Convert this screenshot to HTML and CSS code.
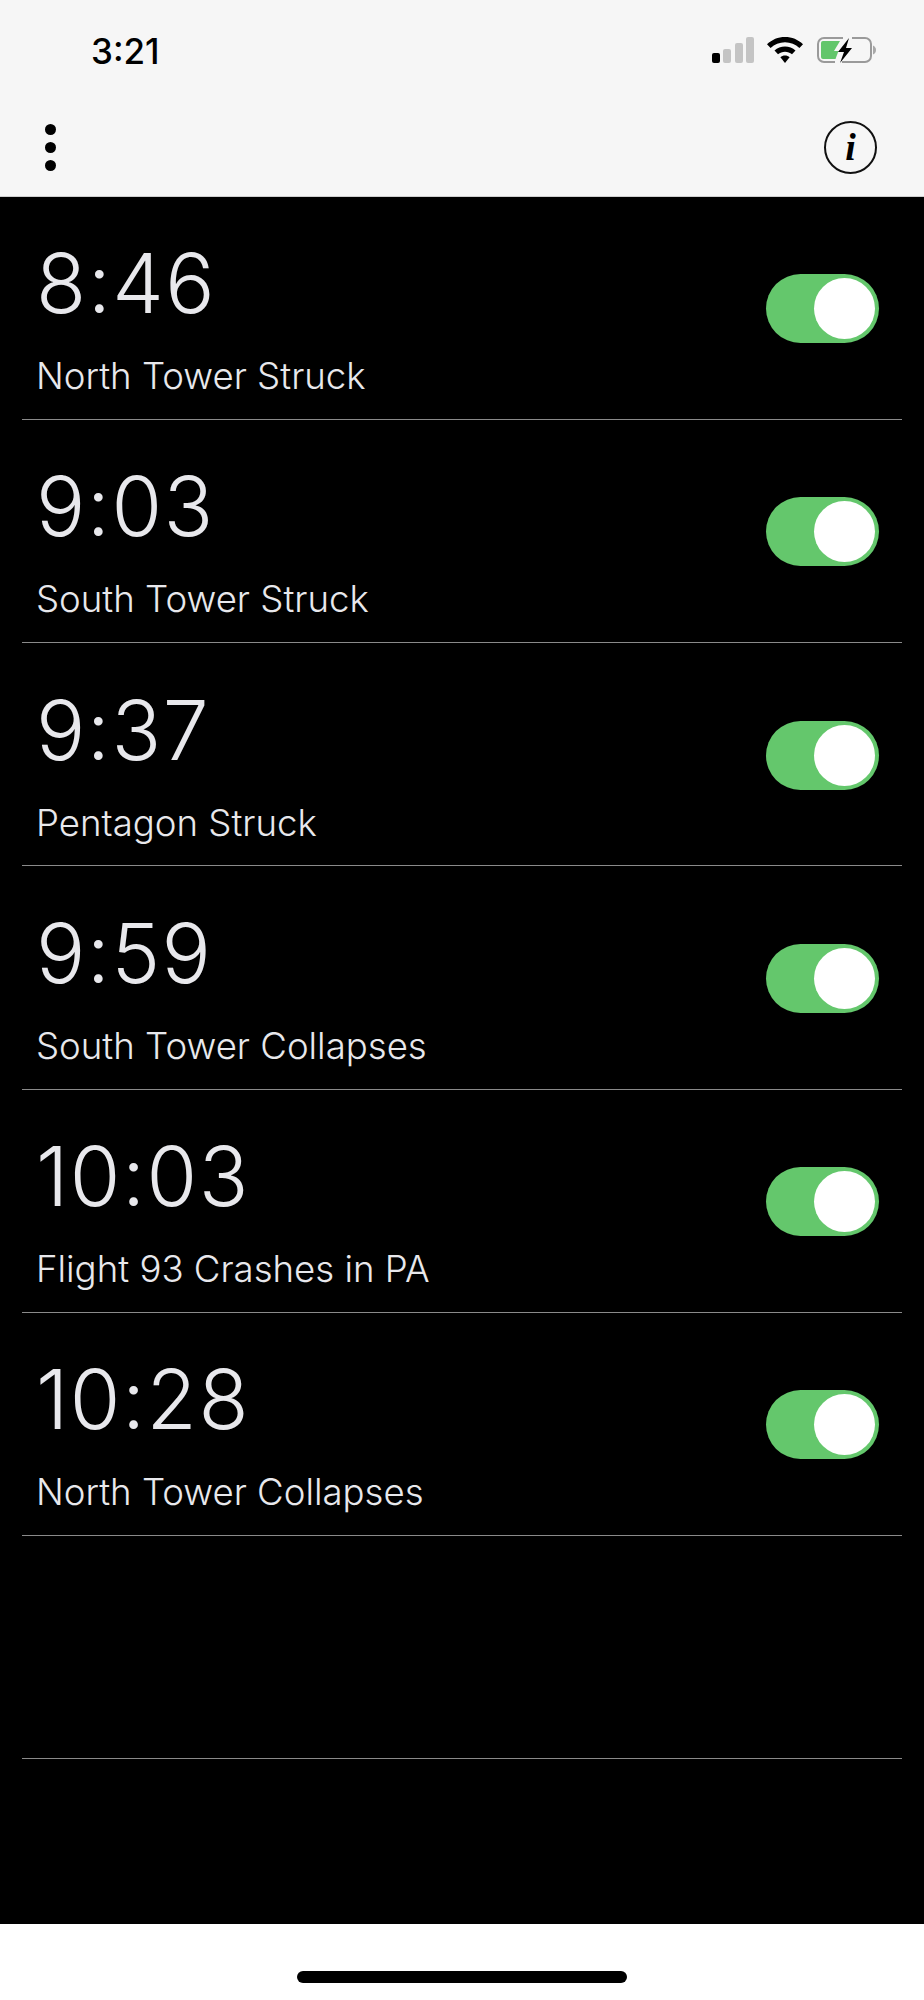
FILE: index.html
```html
<!DOCTYPE html>
<html lang="en">
<head>
<meta charset="utf-8">
<title>Alarms</title>
<link rel="stylesheet" href="styles.css">
</head>
<body>
<div class="screen">
  <header class="top">
    <div class="status">
      <span class="clock">3:21</span>
      <div class="status-icons">
        <svg class="signal" width="42" height="26" viewBox="0 0 42 26">
          <rect x="0" y="16" width="8" height="10" rx="2" fill="#000"/>
          <rect x="11" y="12" width="8" height="14" rx="2" fill="#c4c4c4"/>
          <rect x="23" y="6" width="8" height="20" rx="2" fill="#c4c4c4"/>
          <rect x="34" y="0" width="8" height="26" rx="2" fill="#c4c4c4"/>
        </svg>
        <svg class="wifi" width="36" height="26" viewBox="0 0 36 26">
          <path d="M18 0C11 0 5 2.600 0 7.200L3.600 11C7.500 7.400 12.500 5.300 18 5.300S28.500 7.400 32.400 11L36 7.200C31 2.600 25 0 18 0Z" fill="#000"/>
          <path d="M18 9.500C14 9.500 10.300 11 7.500 13.600L11 17.300C13 15.600 15.400 14.700 18 14.700S23 15.600 25 17.300L28.500 13.600C25.700 11 22 9.500 18 9.500Z" fill="#000"/>
          <path d="M18 18.500C16.200 18.500 14.600 19.100 13.400 20.200L18 26L22.600 20.200C21.400 19.100 19.800 18.500 18 18.500Z" fill="#000"/>
        </svg>
        <svg class="battery" width="59" height="26" viewBox="0 0 59 26">
          <path d="M26 1H7A6 6 0 0 0 1 7V19A6 6 0 0 0 7 25H18" fill="none" stroke="#9a9a9a" stroke-width="2"/>
          <path d="M35 1H48A6 6 0 0 1 54 7V19A6 6 0 0 1 48 25H25" fill="none" stroke="#9a9a9a" stroke-width="2"/>
          <path d="M6 4H23L17 14H21.500L18.500 22H6A2 2 0 0 1 4 20V6A2 2 0 0 1 6 4Z" fill="#62c66b"/>
          <path d="M32 1L21 15H27L23 26L35 11H29Z" fill="#000"/>
          <path d="M56 8.500C58 9.500 59 11 59 13S58 16.500 56 17.500Z" fill="#a8a8a8"/>
        </svg>
      </div>
    </div>
    <nav class="toolbar">
      <div class="more" aria-label="More">
        <span class="dot"></span>
        <span class="dot"></span>
        <span class="dot"></span>
      </div>
      <div class="info">i</div>
    </nav>
  </header>

  <main class="list">
    <section class="row">
      <div class="entry">
        <div class="time">8:46</div>
        <div class="label">North Tower Struck</div>
      </div>
      <div class="toggle"><span class="knob"></span></div>
    </section>
    <section class="row">
      <div class="entry">
        <div class="time">9:03</div>
        <div class="label">South Tower Struck</div>
      </div>
      <div class="toggle"><span class="knob"></span></div>
    </section>
    <section class="row">
      <div class="entry">
        <div class="time">9:37</div>
        <div class="label">Pentagon Struck</div>
      </div>
      <div class="toggle"><span class="knob"></span></div>
    </section>
    <section class="row">
      <div class="entry">
        <div class="time">9:59</div>
        <div class="label">South Tower Collapses</div>
      </div>
      <div class="toggle"><span class="knob"></span></div>
    </section>
    <section class="row">
      <div class="entry">
        <div class="time">10:03</div>
        <div class="label">Flight 93 Crashes in PA</div>
      </div>
      <div class="toggle"><span class="knob"></span></div>
    </section>
    <section class="row">
      <div class="entry">
        <div class="time">10:28</div>
        <div class="label">North Tower Collapses</div>
      </div>
      <div class="toggle"><span class="knob"></span></div>
    </section>
    <section class="row"></section>
  </main>

  <footer class="home">
    <span class="home-bar"></span>
  </footer>
</div>
</body>
</html>
```
FILE: styles.css
```css
* {
  box-sizing: border-box;
}

html,
body {
  margin: 0;
  padding: 0;
  background: #fff;
}

body {
  font-family: Inter, "Liberation Sans", sans-serif;
}

.screen {
  display: flex;
  flex-direction: column;
  width: 924px;
  height: 2000px;
}

.top {
  height: 196.5px;
  background: #f6f6f6;
  border-bottom: 1px solid #cfcfcf;
  flex: none;
}

.status {
  display: flex;
  justify-content: space-between;
  align-items: flex-start;
  height: 100px;
  padding: 33px 48px 0 91px;
}

.clock {
  font-size: 35px;
  line-height: 36px;
  font-weight: 500;
  color: #000;
}

.status-icons {
  display: flex;
  align-items: flex-start;
  gap: 13px;
  padding-top: 4px;
}

.wifi {
  margin-right: 1px;
}

.toolbar {
  display: flex;
  justify-content: space-between;
  align-items: flex-start;
  padding: 21px 47px 0 45px;
}

.more {
  display: flex;
  flex-direction: column;
  gap: 7px;
  padding-top: 3px;
}

.dot {
  display: block;
  width: 11px;
  height: 11px;
  border-radius: 50%;
  background: #000;
}

.info {
  width: 53px;
  height: 53px;
  border: 2px solid #111;
  border-radius: 50%;
  text-align: center;
  font-family: "Liberation Serif", serif;
  font-style: italic;
  font-weight: 700;
  font-size: 38px;
  line-height: 48px;
  color: #000;
}

.list {
  flex: 1;
  background: #000;
  display: grid;
  grid-auto-rows: 223.25px;
  padding: 0 22px;
  align-content: start;
}

.row {
  display: flex;
  justify-content: space-between;
  align-items: center;
  border-bottom: 1px solid #8a8a8a;
  padding: 0 23px 0 14px;
}

.entry {
  color: #e8e8ec;
  padding-top: 17px;
}

.time {
  font-size: 82px;
  line-height: 100px;
  font-weight: 300;
  letter-spacing: 1.5px;
}

.label {
  font-size: 36.6px;
  line-height: 44px;
  font-weight: 350;
  margin-top: 20px;
}

.toggle {
  display: flex;
  justify-content: flex-end;
  align-items: center;
  width: 113px;
  height: 69px;
  margin-top: 2px;
  padding-right: 4px;
  border-radius: 35px;
  background: #64c76c;
}

.knob {
  display: block;
  width: 61px;
  height: 61px;
  border-radius: 50%;
  background: #fff;
}

.home {
  position: relative;
  height: 76px;
  flex: none;
  background: #fff;
}

.home-bar {
  position: absolute;
  left: 297px;
  top: 47px;
  width: 330px;
  height: 12px;
  border-radius: 6px;
  background: #000;
}
```
